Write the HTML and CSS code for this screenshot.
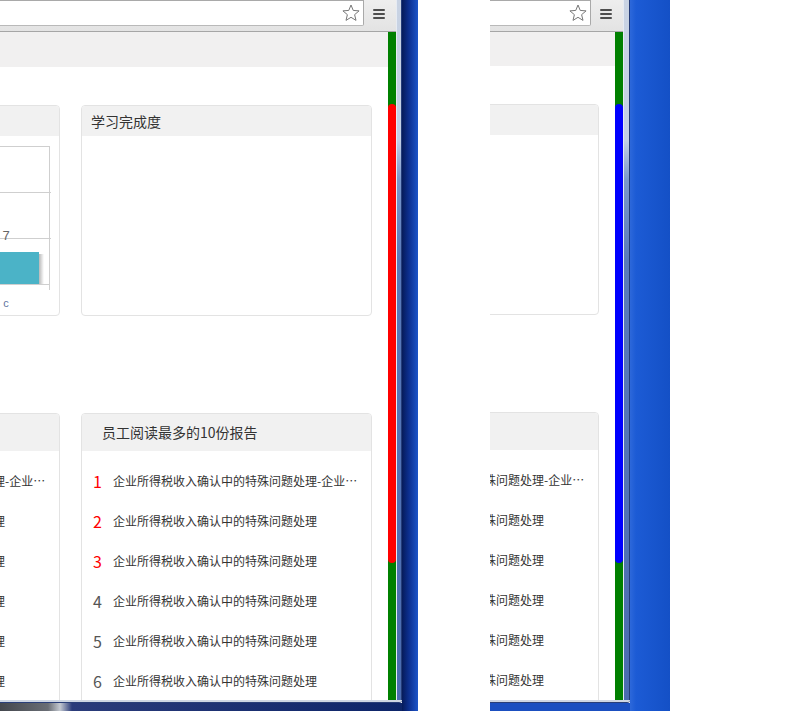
FILE: index.html
```html
<!DOCTYPE html>
<html lang="zh-CN">
<head>
<meta charset="utf-8">
<title>学习统计</title>
<link rel="stylesheet" href="styles.css">
</head>
<body>
<div class="screen">

  <div class="win win-1">
    <div class="win-top">
      <div class="win-main">
        <div class="toolbar">
          <div class="omnibox">
            <svg class="star" viewBox="0 0 18 18"><polygon points="9,1 11.23,6.43 17.08,6.87 12.61,10.67 14,16.38 9,13.3 4,16.38 5.39,10.67 0.92,6.87 6.77,6.43" fill="#fff" stroke="#777" stroke-width="1" stroke-linejoin="round"/></svg>
          </div>
          <div class="menu-btn"><span></span><span></span><span></span></div>
        </div>
        <div class="win-body">
          <div class="viewport">
            <div class="page page-1">
              <div class="band"></div>
              <div class="grid">
                <section class="card">
                  <header class="card-head small">学习人数统计</header>
                  <div class="card-body">
                    <svg class="chart" viewBox="0 0 289 175" width="289" height="175">
                      <defs><linearGradient id="sh1" x1="0" x2="1" y1="0" y2="0"><stop offset="0" stop-color="#000" stop-opacity="0.28"/><stop offset="1" stop-color="#000" stop-opacity="0"/></linearGradient></defs>
                      <g stroke="#cfcfcf" stroke-width="1">
                        <line x1="0" y1="10.5" x2="280" y2="10.5"/>
                        <line x1="0" y1="56.5" x2="281" y2="56.5"/>
                        <line x1="0" y1="102.5" x2="281" y2="102.5"/>
                        <line x1="0" y1="148.5" x2="280" y2="148.5"/>
                        <line x1="279.5" y1="10" x2="279.5" y2="154"/>
                      </g>
                      <rect x="269" y="118" width="5" height="30" fill="url(#sh1)"/>
                      <rect x="203" y="116" width="66" height="32" fill="#4bb3c7"/>
                      <text x="236" y="104" text-anchor="middle" font-size="13" fill="#666">7</text>
                      <text x="236" y="171" text-anchor="middle" font-size="11" fill="#62759e">c</text>
                    </svg>
                  </div>
                </section>
                <section class="card">
                  <header class="card-head small">学习完成度</header>
                  <div class="card-body"></div>
                </section>
                <section class="card">
                  <header class="card-head big">员工阅读最多的10份课程</header>
                  <ol class="rank">
                    <li><span class="num top">1</span><span class="txt">企业所得税收入确认中的特殊问题处理-企业所得税收入确认中的特殊问题处理</span></li>
                    <li><span class="num top">2</span><span class="txt">企业所得税收入确认中的特殊问题处理</span></li>
                    <li><span class="num top">3</span><span class="txt">企业所得税收入确认中的特殊问题处理</span></li>
                    <li><span class="num">4</span><span class="txt">企业所得税收入确认中的特殊问题处理</span></li>
                    <li><span class="num">5</span><span class="txt">企业所得税收入确认中的特殊问题处理</span></li>
                    <li><span class="num">6</span><span class="txt">企业所得税收入确认中的特殊问题处理</span></li>
                    <li><span class="num">7</span><span class="txt">企业所得税收入确认中的特殊问题处理</span></li>
                  </ol>
                </section>
                <section class="card">
                  <header class="card-head big">员工阅读最多的10份报告</header>
                  <ol class="rank">
                    <li><span class="num top">1</span><span class="txt">企业所得税收入确认中的特殊问题处理-企业所得税收入确认中的特殊问题处理</span></li>
                    <li><span class="num top">2</span><span class="txt">企业所得税收入确认中的特殊问题处理</span></li>
                    <li><span class="num top">3</span><span class="txt">企业所得税收入确认中的特殊问题处理</span></li>
                    <li><span class="num">4</span><span class="txt">企业所得税收入确认中的特殊问题处理</span></li>
                    <li><span class="num">5</span><span class="txt">企业所得税收入确认中的特殊问题处理</span></li>
                    <li><span class="num">6</span><span class="txt">企业所得税收入确认中的特殊问题处理</span></li>
                    <li><span class="num">7</span><span class="txt">企业所得税收入确认中的特殊问题处理</span></li>
                  </ol>
                </section>
              </div>
            </div>
          </div>
          <div class="scrollbar"><div class="thumb thumb-red"></div></div>
        </div>
      </div>
      <div class="win-rframe"></div>
    </div>
    <div class="win-bframe"></div>
    <div class="win-below below-1"></div>
  </div>

  <div class="desk desk-1"></div>
  <div class="blank blank-1"></div>

  <div class="win win-2">
    <div class="win-top">
      <div class="win-main">
        <div class="toolbar">
          <div class="omnibox">
            <svg class="star" viewBox="0 0 18 18"><polygon points="9,1 11.23,6.43 17.08,6.87 12.61,10.67 14,16.38 9,13.3 4,16.38 5.39,10.67 0.92,6.87 6.77,6.43" fill="#fff" stroke="#777" stroke-width="1" stroke-linejoin="round"/></svg>
          </div>
          <div class="menu-btn"><span></span><span></span><span></span></div>
        </div>
        <div class="win-body">
          <div class="viewport">
            <div class="page page-2">
              <div class="band"></div>
              <div class="grid">
                <section class="card">
                  <header class="card-head small">学习人数统计</header>
                  <div class="card-body"></div>
                </section>
                <section class="card">
                  <header class="card-head small">学习完成度</header>
                  <div class="card-body"></div>
                </section>
                <section class="card">
                  <header class="card-head big">员工阅读最多的10份课程</header>
                  <ol class="rank">
                    <li><span class="num top">1</span><span class="txt">企业所得税收入确认中的特殊问题处理-企业所得税收入确认中的特殊问题处理</span></li>
                    <li><span class="num top">2</span><span class="txt">企业所得税收入确认中的特殊问题处理</span></li>
                    <li><span class="num top">3</span><span class="txt">企业所得税收入确认中的特殊问题处理</span></li>
                    <li><span class="num">4</span><span class="txt">企业所得税收入确认中的特殊问题处理</span></li>
                    <li><span class="num">5</span><span class="txt">企业所得税收入确认中的特殊问题处理</span></li>
                    <li><span class="num">6</span><span class="txt">企业所得税收入确认中的特殊问题处理</span></li>
                    <li><span class="num">7</span><span class="txt">企业所得税收入确认中的特殊问题处理</span></li>
                  </ol>
                </section>
                <section class="card">
                  <header class="card-head big">员工阅读最多的10份报告</header>
                  <ol class="rank">
                    <li><span class="num top">1</span><span class="txt">企业所得税收入确认中的特殊问题处理-企业所得税收入确认中的特殊问题处理</span></li>
                    <li><span class="num top">2</span><span class="txt">企业所得税收入确认中的特殊问题处理</span></li>
                    <li><span class="num top">3</span><span class="txt">企业所得税收入确认中的特殊问题处理</span></li>
                    <li><span class="num">4</span><span class="txt">企业所得税收入确认中的特殊问题处理</span></li>
                    <li><span class="num">5</span><span class="txt">企业所得税收入确认中的特殊问题处理</span></li>
                    <li><span class="num">6</span><span class="txt">企业所得税收入确认中的特殊问题处理</span></li>
                    <li><span class="num">7</span><span class="txt">企业所得税收入确认中的特殊问题处理</span></li>
                  </ol>
                </section>
              </div>
            </div>
          </div>
          <div class="scrollbar"><div class="thumb thumb-blue"></div></div>
        </div>
      </div>
      <div class="win-rframe rframe-2"></div>
    </div>
    <div class="win-bframe"></div>
    <div class="win-below below-2"></div>
  </div>

  <div class="desk desk-2"></div>
  <div class="blank blank-2"></div>

</div>
</body>
</html>
```

FILE: styles.css
```css
* { box-sizing: border-box; }
html, body { margin: 0; padding: 0; }
body {
  width: 791px;
  height: 711px;
  overflow: hidden;
  background: #fff;
  font-family: "Noto Sans CJK SC", "Noto Sans", sans-serif;
}
.screen { display: flex; width: 791px; height: 711px; }

/* ---------- windows ---------- */
.win { display: flex; flex-direction: column; flex: none; height: 711px; }
.win-1 { width: 402px; }
.win-2 { width: 140px; }
.win-top { display: flex; height: 700px; }
.win-main { display: flex; flex-direction: column; flex: 1; min-width: 0; }

.toolbar {
  display: flex;
  flex: none;
  height: 32px;
  border-bottom: 1px solid #a6a6a6;
  background: linear-gradient(#eeeeee, #e3e3e3);
}
.omnibox {
  flex: 1;
  min-width: 0;
  height: 26px;
  background: #fff;
  border: 1px solid #a9a9a9;
  border-left: none;
  border-bottom-color: #b9b9b9;
  border-radius: 0 0 2px 0;
  display: flex;
  justify-content: flex-end;
  align-items: center;
  padding-right: 3px;
}
.star { width: 18px; height: 18px; display: block; }
.menu-btn {
  flex: none;
  width: 32px;
  display: flex;
  flex-direction: column;
  align-items: center;
  gap: 2px;
  padding-top: 9px;
  padding-right: 2px;
}
.menu-btn span { width: 12px; height: 2px; background: #4e4e4e; border-radius: 1px; }

.win-body { display: flex; height: 668px; }
.viewport { flex: 1; min-width: 0; overflow: hidden; background: #fff; }
.scrollbar { flex: none; width: 8px; background: #008000; }
.thumb { margin-top: 72px; height: 459px; border-radius: 4px; }
.thumb-red { background: #ff0000; }
.thumb-blue { background: #0000ff; }

.win-rframe {
  flex: none;
  width: 6px;
  border-left: 1px solid #e6ebf3;
  border-right: 1px solid #243c78;
  background: linear-gradient(#c9d3e3 0, #c3d0e6 140px, #7b98cc 180px, #5a7bbb 260px, #4a6cb0 100%);
}
.rframe-2 { width: 7px; }
.win-bframe {
  height: 3px;
  background: #cfd7e3;
  border-bottom: 1px solid #2a3f78;
  border-radius: 0 0 3px 0;
}
.win-below { flex: 1; }
.below-1 { background: linear-gradient(to right, #44474d 0, #6a6e75 48px, #c4c9d1 60px, #2b3c7a 72px, #0d2569 100%); }
.below-2 { background: #1b4fc0; }

/* ---------- desktop ---------- */
.desk { flex: none; height: 711px; }
.desk-1 { width: 16px; background: linear-gradient(to right, #061b5a 0, #0c2e8c 40%, #1d55c8 100%); }
.desk-2 { width: 40px; background: linear-gradient(to right, #2d68da 0, #1c5bd5 15%, #1450c6 100%); }
.blank { flex: none; height: 711px; background: #fff; }
.blank-1 { width: 72px; }
.blank-2 { width: 121px; }

/* ---------- page ---------- */
.page { width: 900px; }
.page-1 { margin-left: -231px; }
.page-2 { margin-left: -494px; margin-top: -1px; }
.band { height: 35px; background: #f1f0f0; }
.grid {
  padding-top: 38px;
  display: grid;
  grid-template-columns: 291px 291px;
  grid-template-rows: 211px auto;
  column-gap: 21px;
  row-gap: 97px;
}
.card {
  border: 1px solid #e3e3e3;
  border-radius: 4px;
  background: #fff;
  overflow: hidden;
}
.card-head {
  background: #f1f1f1;
  color: #333;
  font-size: 14px;
  white-space: nowrap;
}
.card-head.small { height: 30px; line-height: 30px; padding-left: 9px; }
.card-head.big { height: 37px; line-height: 37px; padding-left: 20px; }
.chart { display: block; font-family: "Liberation Sans", Arial, sans-serif; }

.rank { list-style: none; margin: 0; padding: 10px 9px 0 11px; }
.rank li { height: 40px; display: flex; align-items: center; }
.num {
  flex: none;
  width: 20px;
  font-size: 16px;
  line-height: 20px;
  color: #555;
}
.num.top { color: #ff0000; }
.txt {
  flex: 1;
  min-width: 0;
  font-size: 12px;
  line-height: 16px;
  color: #333;
  white-space: nowrap;
  overflow: hidden;
  text-overflow: ellipsis;
}
```
